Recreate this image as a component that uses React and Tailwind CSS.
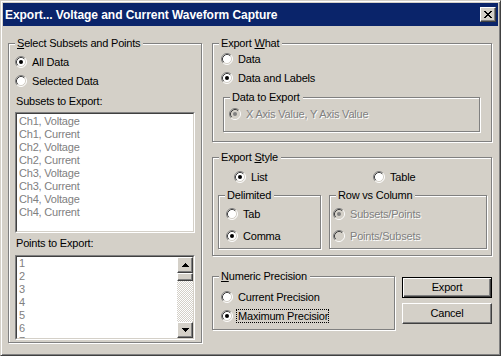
import React from 'react';

const subsets = [
  'Ch1, Voltage',
  'Ch1, Current',
  'Ch2, Voltage',
  'Ch2, Current',
  'Ch3, Voltage',
  'Ch3, Current',
  'Ch4, Voltage',
  'Ch4, Current',
];
const points = ['1', '2', '3', '4', '5', '6', '7'];

const RadioDot = ({ checked, disabled }) => {
  const fill = disabled ? '#d4d0c8' : '#ffffff';
  const dot = disabled ? '#808080' : '#000000';
  return (
    <svg width="12" height="12" viewBox="0 0 12 12" className="shrink-0">
      <circle cx="6" cy="6" r="5" fill={fill} />
      <path d="M2.11 9.89A5.5 5.5 0 0 1 9.89 2.11" stroke="#808080" fill="none" />
      <path d="M9.89 2.11A5.5 5.5 0 0 1 2.11 9.89" stroke="#ffffff" fill="none" />
      <path d="M2.82 9.18A4.5 4.5 0 0 1 9.18 2.82" stroke="#404040" fill="none" />
      <path d="M9.18 2.82A4.5 4.5 0 0 1 2.82 9.18" stroke="#d4d0c8" fill="none" />
      {checked && <circle cx="6" cy="6" r="2" fill={dot} />}
    </svg>
  );
};

const Radio = ({ label, checked, disabled, focus, className = '' }) => (
  <div className={`flex items-center h-[12px] ${className}`}>
    <RadioDot checked={checked} disabled={disabled} />
    {focus ? (
      <span className="ml-[3px] w-[93px] h-[14px] pl-[1px] border border-dotted border-black overflow-hidden whitespace-nowrap leading-[12px]">
        {label}
      </span>
    ) : (
      <span
        className={`ml-[5px] leading-[13px] whitespace-nowrap ${
          disabled ? 'text-[#808080] [text-shadow:1px_1px_0_#fff]' : ''
        }`}
      >
        {label}
      </span>
    )}
  </div>
);

// etched frame with a caption sitting on the top line
const GroupBox = ({ legend, className = '', children }) => (
  <div
    className={`relative border border-[#808080] shadow-[inset_1px_1px_0_#fff,1px_1px_0_#fff] ${className}`}
  >
    <span className="absolute -top-[7px] left-[6px] pl-[2px] pr-[3px] bg-[#d4d0c8] leading-[13px] whitespace-nowrap">
      {legend}
    </span>
    {children}
  </div>
);

const Sunken = ({ className = '', children }) => (
  <div
    className={`border border-t-[#808080] border-l-[#808080] border-r-white border-b-white ${className}`}
  >
    <div className="h-full border border-t-[#404040] border-l-[#404040] border-r-[#d4d0c8] border-b-[#d4d0c8] bg-white overflow-hidden">
      {children}
    </div>
  </div>
);

const Raised = ({ className = '', children }) => (
  <div
    className={`flex items-center justify-center bg-[#d4d0c8] border border-t-white border-l-white border-r-[#404040] border-b-[#404040] shadow-[inset_-1px_-1px_0_#808080] ${className}`}
  >
    {children}
  </div>
);

const Arrow = ({ up }) => (
  <svg width="7" height="4" viewBox="0 0 7 4" shapeRendering="crispEdges">
    {up ? (
      <path d="M3 0h1v1H3zM2 1h3v1H2zM1 2h5v1H1zM0 3h7v1H0z" fill="#000" />
    ) : (
      <path d="M0 0h7v1H0zM1 1h5v1H1zM2 2h3v1H2zM3 3h1v1H3z" fill="#000" />
    )}
  </svg>
);

export default function App() {
  return (
    <div className="w-[501px] h-[356px] flex flex-col bg-[#d4d0c8] border border-t-[#d4d0c8] border-l-[#d4d0c8] border-r-[#404040] border-b-[#404040] shadow-[inset_1px_1px_0_#fff,inset_-1px_-1px_0_#808080] p-[2px] text-[11px] text-black font-['Liberation_Sans',Arial,sans-serif] select-none">
      {/* title bar */}
      <div className="h-[23px] shrink-0 flex items-center bg-[#0a246a] pl-[2px] pr-[2px]">
        <span className="text-white font-bold text-[12px] tracking-[-0.05px] whitespace-nowrap">
          Export... Voltage and Current Waveform Capture
        </span>
        <Raised className="ml-auto w-[16px] h-[15px]">
          <svg width="8" height="7" viewBox="0 0 8 7" shapeRendering="crispEdges">
            <path
              d="M0 0h2v1H0zM6 0h2v1H6zM1 1h2v1H1zM5 1h2v1H5zM2 2h4v1H2zM3 3h2v1H3zM2 4h4v1H2zM1 5h2v1H1zM5 5h2v1H5zM0 6h2v1H0zM6 6h2v1H6z"
              fill="#000"
            />
          </svg>
        </Raised>
      </div>

      <div className="flex pl-[5px] pt-[17px] tracking-[-0.2px]">
        {/* left column */}
        <GroupBox
          className="w-[194px] h-[300px] shrink-0"
          legend={
            <>
              <u>S</u>elect Subsets and Points
            </>
          }
        >
          <div className="flex flex-col pl-[6px] pt-[12px]">
            <Radio label="All Data" checked />
            <Radio label="Selected Data" className="mt-[7px]" />
            <div className="mt-[8px] ml-[1px] leading-[13px]">Subsets to Export:</div>
            <Sunken className="mt-[4px] w-[180px] h-[121px]">
              <div className="pt-[1px] pl-[2px] text-[#808080] leading-[13px]">
                {subsets.map((s) => (
                  <div key={s}>{s}</div>
                ))}
              </div>
            </Sunken>
            <div className="mt-[4px] ml-[1px] leading-[13px]">Points to Export:</div>
            <Sunken className="mt-[5px] w-[180px] h-[85px]">
              <div className="flex h-full">
                <div className="flex-1 pl-[2px] text-[#808080] leading-[13px] overflow-hidden">
                  {points.map((p) => (
                    <div key={p}>{p}</div>
                  ))}
                </div>
                <div className="w-[16px] flex flex-col">
                  <Raised className="h-[16px]">
                    <Arrow up />
                  </Raised>
                  <Raised className="h-[8px]" />
                  <div className="flex-1 bg-[repeating-conic-gradient(#d4d0c8_0_25%,#fff_0_50%)] bg-size-[2px_2px]" />
                  <Raised className="h-[16px]">
                    <Arrow />
                  </Raised>
                </div>
              </div>
            </Sunken>
          </div>
        </GroupBox>

        {/* right column */}
        <div className="ml-[10px] w-[280px] flex flex-col">
          <GroupBox
            className="h-[99px]"
            legend={
              <>
                Export <u>W</u>hat
              </>
            }
          >
            <div className="flex flex-col pl-[8px] pt-[9px]">
              <Radio label="Data" />
              <Radio label="Data and Labels" checked className="mt-[7px]" />
              <GroupBox legend="Data to Export" className="mt-[13px] ml-[2px] w-[257px] h-[35px]">
                <div className="pl-[5px] pt-[10px]">
                  <Radio label="X Axis Value, Y Axis Value" checked disabled />
                </div>
              </GroupBox>
            </div>
          </GroupBox>

          <GroupBox
            className="mt-[15px] h-[99px]"
            legend={
              <>
                Export <u>S</u>tyle
              </>
            }
          >
            <div className="flex pl-[21px] pt-[13px]">
              <div className="w-[139px]">
                <Radio label="List" checked />
              </div>
              <Radio label="Table" />
            </div>
            <div className="flex pl-[5px] mt-[12px]">
              <GroupBox legend="Delimited" className="w-[103px] h-[54px]">
                <div className="flex flex-col pl-[7px] pt-[12px]">
                  <Radio label="Tab" />
                  <Radio label="Comma" checked className="mt-[10px]" />
                </div>
              </GroupBox>
              <GroupBox legend="Row vs Column" className="ml-[8px] w-[158px] h-[54px]">
                <div className="flex flex-col pl-[3px] pt-[12px]">
                  <Radio label="Subsets/Points" checked disabled />
                  <Radio label="Points/Subsets" disabled className="mt-[10px]" />
                </div>
              </GroupBox>
            </div>
          </GroupBox>

          <div className="mt-[20px] flex">
            <GroupBox
              className="w-[183px] h-[54px]"
              legend={
                <>
                  <u>N</u>umeric Precision
                </>
              }
            >
              <div className="flex flex-col pl-[8px] pt-[14px]">
                <Radio label="Current Precision" />
                <Radio label="Maximum Precision" checked focus className="mt-[7px]" />
              </div>
            </GroupBox>
            <div className="ml-[7px] pt-[1px] flex flex-col">
              <div className="w-[90px] h-[21px] flex items-center justify-center bg-[#d4d0c8] border border-black shadow-[inset_1px_1px_0_#fff,inset_-1px_-1px_0_#404040,inset_-2px_-2px_0_#808080]">
                Export
              </div>
              <Raised className="mt-[5px] w-[90px] h-[21px]">Cancel</Raised>
            </div>
          </div>
        </div>
      </div>
    </div>
  );
}
